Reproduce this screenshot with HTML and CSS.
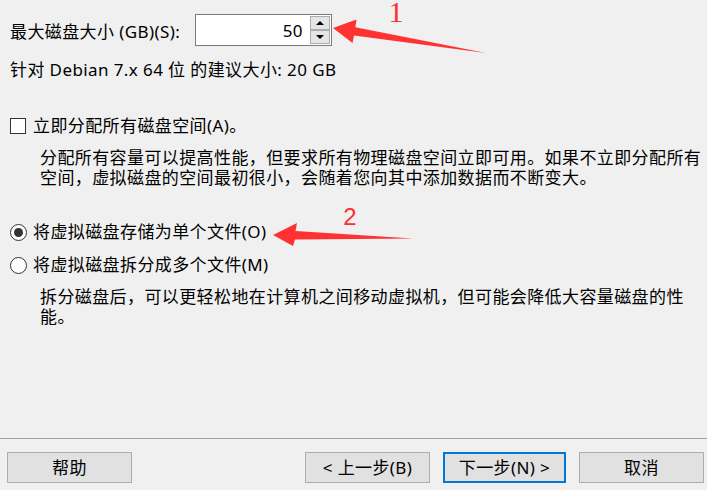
FILE: index.html
```html
<!DOCTYPE html>
<html lang="zh-CN">
<head>
<meta charset="utf-8">
<title>指定磁盘容量</title>
<link rel="stylesheet" href="styles.css">
</head>
<body>
<div class="dialog">
  <div class="content">
    <div class="size-row">
      <span class="size-label">最大磁盘大小 (GB)(S):</span>
      <div class="spin">
        <div class="spin-input">50</div>
        <div class="spin-buttons">
          <div class="spin-btn"><span class="tri-up"></span></div>
          <div class="spin-btn"><span class="tri-down"></span></div>
        </div>
      </div>
    </div>
    <div class="hint">针对 Debian 7.x 64 位 的建议大小: 20 GB</div>
    <div class="option check-option"><span class="checkbox"></span><span class="opt-text">立即分配所有磁盘空间(A)。</span></div>
    <p class="desc">分配所有容量可以提高性能，但要求所有物理磁盘空间立即可用。如果不立即分配所有<br>空间，虚拟磁盘的空间最初很小，会随着您向其中添加数据而不断变大。</p>
    <div class="option radio-option first-radio"><span class="radio checked"></span><span class="opt-text">将虚拟磁盘存储为单个文件(O)</span></div>
    <div class="option radio-option second-radio"><span class="radio"></span><span class="opt-text">将虚拟磁盘拆分成多个文件(M)</span></div>
    <p class="desc">拆分磁盘后，可以更轻松地在计算机之间移动虚拟机，但可能会降低大容量磁盘的性<br>能。</p>
  </div>
  <div class="footer">
    <button class="btn">帮助</button>
    <button class="btn btn-back">&lt; 上一步(B)</button>
    <button class="btn btn-default">下一步(N) &gt;</button>
    <button class="btn btn-cancel">取消</button>
  </div>
  <svg class="annotations" width="707" height="490" viewBox="0 0 707 490">
    <polygon class="arrow" points="333,28 356.5,19.5 355.3,27.3 486,53 354,35.5 352.5,43"/>
    <text class="num num-1" x="396" y="22">1</text>
    <polygon class="arrow" points="273,235 297,223 295.5,231 413,238.5 295,239.5 293,246"/>
    <text class="num num-2" x="350" y="225">2</text>
  </svg>
</div>
</body>
</html>
```

FILE: styles.css
```css
* { box-sizing: border-box; }
html, body { margin: 0; padding: 0; }
body {
  background: #f0f0f0;
  font-family: "Noto Sans", "Noto Sans CJK SC", sans-serif;
  font-size: 17px;
  letter-spacing: 0.4px;
  color: #000;
}
.dialog {
  position: relative;
  width: 707px;
  height: 490px;
  display: flex;
  flex-direction: column;
  overflow: hidden;
}
.content {
  flex: 1;
  padding-left: 10px;
}
.size-row {
  margin-top: 14px;
  height: 32px;
  display: flex;
  align-items: center;
}
.size-label {
  line-height: 20px;
  padding-top: 3px;
  width: 185px;
  white-space: nowrap;
}
.spin {
  display: flex;
  height: 32px;
}
.spin-input {
  width: 114px;
  height: 32px;
  background: #fff;
  border: 1px solid #7a7a7a;
  border-right: none;
  text-align: right;
  padding-right: 6px;
  line-height: 30px;
  padding-top: 1px;
}
.spin-buttons {
  width: 23px;
  height: 32px;
  display: flex;
  flex-direction: column;
  border: 1px solid #7a7a7a;
  border-left: none;
  background: #fff;
  padding: 1px;
}
.spin-btn {
  flex: 1;
  background: #e5e5e5;
  border: 1px solid #acacac;
  display: flex;
  align-items: center;
  justify-content: center;
}
.tri-up {
  width: 0; height: 0;
  border-left: 4px solid transparent;
  border-right: 4px solid transparent;
  border-bottom: 4px solid #000;
}
.tri-down {
  width: 0; height: 0;
  border-left: 4px solid transparent;
  border-right: 4px solid transparent;
  border-top: 4px solid #000;
}
.hint {
  margin-top: 14px;
  line-height: 20px;
  white-space: nowrap;
}
.option {
  display: flex;
  align-items: center;
  height: 20px;
  line-height: 20px;
  white-space: nowrap;
}
.check-option { margin-top: 36px; }
.first-radio { margin-top: 34px; }
.second-radio { margin-top: 13px; }
.checkbox {
  width: 16px;
  height: 16px;
  background: #fff;
  border: 1px solid #333;
  margin-right: 7px;
  flex: none;
}
.radio {
  width: 17px;
  height: 17px;
  border-radius: 50%;
  background: #fff;
  border: 1px solid #333;
  margin-right: 6px;
  flex: none;
  display: flex;
  align-items: center;
  justify-content: center;
}
.radio.checked::after {
  content: "";
  width: 9px;
  height: 9px;
  border-radius: 50%;
  background: #333;
}
.desc {
  margin: 12px 0 0 0;
  padding-left: 30px;
  line-height: 20px;
  white-space: nowrap;
}
.footer {
  border-top: 1px solid #a0a0a0;
  padding: 13px 3px 7px 7px;
  display: flex;
  align-items: flex-start;
}
.btn {
  width: 125px;
  height: 31px;
  background: #e1e1e1;
  border: 1px solid #adadad;
  font: inherit;
  letter-spacing: inherit;
  color: #000;
  padding: 0;
  line-height: 27px;
}
.btn-back { margin-left: auto; }
.btn-default {
  margin-left: 13px;
  width: 123px;
  border: 2px solid #0078d7;
}
.btn-cancel { margin-left: 13px; }
.annotations {
  position: absolute;
  left: 0;
  top: 0;
  pointer-events: none;
}
.arrow { fill: #ff3232; }
.num { fill: #ff2e2e; text-anchor: middle; letter-spacing: 0; }
.num-1 { font-family: "Liberation Serif", serif; font-size: 30px; }
.num-2 { font-family: "Liberation Sans", sans-serif; font-size: 24px; }
```
